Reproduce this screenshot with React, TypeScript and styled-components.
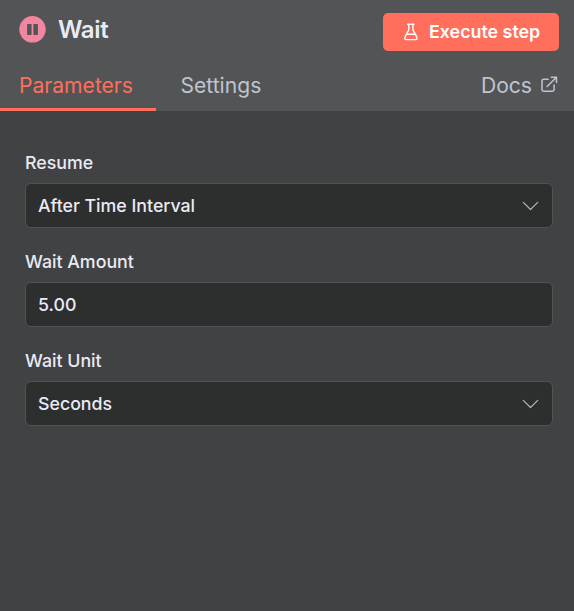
import React from "react";
import styled, { createGlobalStyle } from "styled-components";

const GlobalStyle = createGlobalStyle`
  *, *::before, *::after { box-sizing: border-box; }
  body { margin: 0; background: #414244; font-family: Inter, "Liberation Sans", sans-serif; }
`;

const Panel = styled.main`
  display: flex;
  flex-direction: column;
  height: 611px;
  background: #414244;
  color: #eaeaf4;
  overflow: hidden;
`;

const Header = styled.header`
  display: flex;
  flex-direction: column;
  justify-content: space-between;
  height: 111px;
  background: #525456;
`;

const TitleBar = styled.div`
  display: flex;
  align-items: flex-start;
  justify-content: space-between;
  padding: 13px 15px 0 19px;
`;

const NodeName = styled.div`
  display: flex;
  align-items: center;
  gap: 12px;
  height: 33px;
`;

const Title = styled.h1`
  margin: 0;
  font-size: 24px;
  line-height: 33px;
  font-weight: 600;
  letter-spacing: -0.3px;
`;

const ExecuteButton = styled.button`
  display: flex;
  align-items: center;
  gap: 10px;
  width: 176px;
  height: 38px;
  padding: 0 0 0 20px;
  border: 0;
  border-radius: 5px;
  background: #ff6f5c;
  color: #fff;
  font: 600 17.85px/38px Inter, "Liberation Sans", sans-serif;
  white-space: nowrap;
`;

const Tabs = styled.nav`
  display: flex;
  height: 50px;
`;

const Tab = styled.a<{ $active?: boolean }>`
  width: ${({ $active }) => ($active ? "156px" : "130px")};
  padding-left: ${({ $active }) => ($active ? "19px" : "24.5px")};
  border-bottom: 3px solid ${({ $active }) => ($active ? "#ff6f5c" : "transparent")};
  color: ${({ $active }) => ($active ? "#ff6f5c" : "#c0c4d0")};
  font-size: 21.1px;
  line-height: 49px;
`;

const DocsLink = styled.a`
  display: flex;
  gap: 9px;
  margin-left: auto;
  padding-right: 16px;
  color: #c0c4d0;
  font-size: 21.1px;
  line-height: 49px;

  svg { margin-top: 15px; }
`;

const Form = styled.form`
  display: flex;
  flex-direction: column;
  gap: 21px;
  padding: 39px 21px 0 25px;
`;

const Field = styled.div`
  display: flex;
  flex-direction: column;
  gap: 7px;
`;

const Label = styled.label`
  font-size: 17.8px;
  line-height: 26px;
  font-weight: 500;
`;

const Control = styled.div`
  display: flex;
  align-items: center;
  justify-content: space-between;
  height: 45px;
  padding: 0 12px;
  border: 1px solid #525356;
  border-radius: 6px;
  background: #2d2e2e;
  font-size: 17.75px;
  font-weight: 500;
`;

const PauseIcon = () => (
  <svg width="27" height="27" viewBox="0 0 27 27">
    <circle cx="13.5" cy="13.3" r="13.2" fill="#f286a0" />
    <rect x="8.1" y="8" width="4.5" height="11" rx="0.7" fill="#525456" />
    <rect x="14.4" y="8" width="4.5" height="11" rx="0.7" fill="#525456" />
  </svg>
);

const FlaskIcon = () => (
  <svg width="16" height="18" viewBox="0 0 16 18" fill="none" stroke="currentColor" strokeWidth="1.4" strokeLinecap="round" strokeLinejoin="round">
    <path d="M4.6 1.2h6.4M5.8 1.2v5.5L2.1 13.9q-1.1 2.7 1.3 2.7h9q2.4 0 1.3-2.7L9.9 6.7V1.2M4 11.3h7.8" />
  </svg>
);

const ExternalIcon = () => (
  <svg width="17" height="17" viewBox="0 0 17 17" fill="none" stroke="currentColor" strokeWidth="1.5" strokeLinecap="round" strokeLinejoin="round">
    <path d="M7.2 3.2H2.8a1.8 1.8 0 0 0-1.8 1.8v8.5a1.8 1.8 0 0 0 1.8 1.8h8.5a1.8 1.8 0 0 0 1.8-1.8V9M10.3 1.2h5.2v5.2M15.5 1.2L6.1 10.5" />
  </svg>
);

const ChevronIcon = () => (
  <svg width="18" height="10" viewBox="0 0 18 10" fill="none" stroke="#b3b4bd" strokeWidth="1.2" strokeLinecap="round" strokeLinejoin="round">
    <path d="M1.3 1.4l7.2 7.1 7.2-7.1" />
  </svg>
);

const fields = [
  { label: "Resume", value: "After Time Interval", select: true },
  { label: "Wait Amount", value: "5.00", select: false },
  { label: "Wait Unit", value: "Seconds", select: true },
];

export default function App() {
  return (
    <>
      <GlobalStyle />
      <Panel>
        <Header>
          <TitleBar>
            <NodeName>
              <PauseIcon />
              <Title>Wait</Title>
            </NodeName>
            <ExecuteButton type="button">
              <FlaskIcon />
              Execute step
            </ExecuteButton>
          </TitleBar>
          <Tabs>
            <Tab $active>Parameters</Tab>
            <Tab>Settings</Tab>
            <DocsLink>
              Docs
              <ExternalIcon />
            </DocsLink>
          </Tabs>
        </Header>
        <Form>
          {fields.map((field) => (
            <Field key={field.label}>
              <Label>{field.label}</Label>
              <Control>
                {field.value}
                {field.select && <ChevronIcon />}
              </Control>
            </Field>
          ))}
        </Form>
      </Panel>
    </>
  );
}
